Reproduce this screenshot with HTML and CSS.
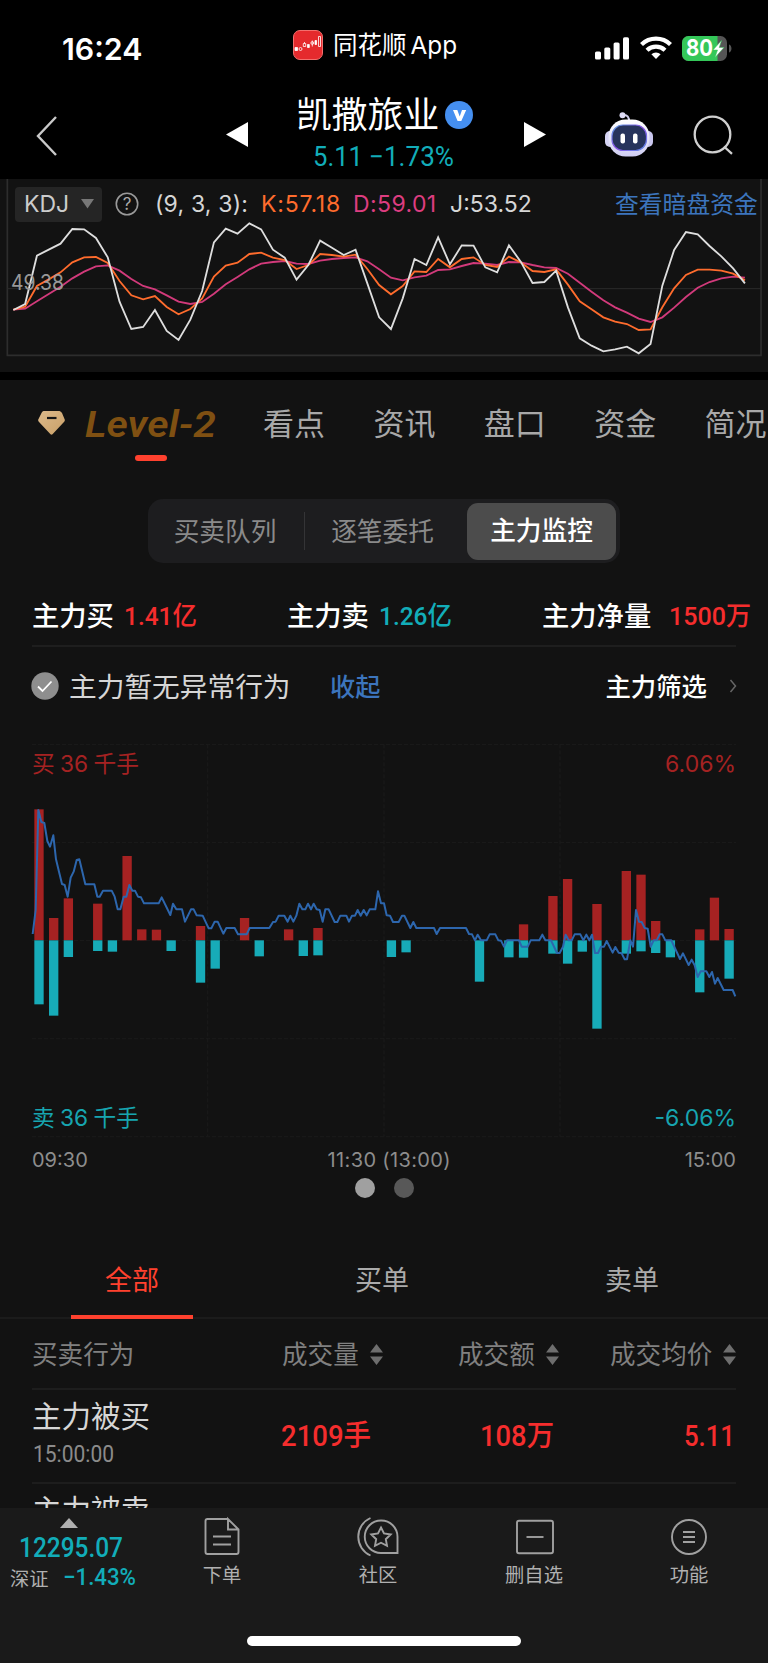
FILE: index.html
```
<!DOCTYPE html>
<html lang="zh-CN">
<head>
<meta charset="utf-8">
<title>凯撒旅业</title>
<link rel="stylesheet" href="styles.css">
</head>
<body>
<div class="phone">
  <header class="top">
    <div class="status">
      <span class="clock">16:24</span>
      <span class="app">
        <svg width="30" height="30" viewBox="0 0 30 30"><rect x=".5" y=".5" width="29" height="29" rx="6.5" fill="#e52a2d" stroke="#f3706e"/><g stroke="#fff" stroke-width=".8" fill="none"><path d="M2 17.500h2.500v3H2z" fill="#fff"/><circle cx="7.500" cy="19" r="1.500"/><path d="M11.500 12v1.500M10.300 13.500h2.400v3h-2.400z"/><path d="M14.500 14.500h1.800v3h-1.800z" fill="#fff"/><circle cx="19.300" cy="13" r="1.400"/><path d="M19.300 10.500v6"/><path d="M22 10.500h1.500v4H22z" fill="#fff"/><path d="M25.500 6.500h2v10h-2z"/></g></svg>
        <span>同花顺<i>App</i></span>
      </span>
      <span class="signals">
        <svg width="34" height="23" viewBox="0 0 34 23" fill="#fff"><rect y="14.500" width="6" height="8" rx="1.600"/><rect x="9.300" y="10.500" width="6" height="12" rx="1.600"/><rect x="18.600" y="5.500" width="6" height="17" rx="1.600"/><rect x="28" y=".3" width="6" height="22.200" rx="1.600"/></svg>
        <svg class="wifi" width="32" height="25" viewBox="0 0 32 25"><g fill="none" stroke="#fff" stroke-width="4.300"><path d="M1.500 9.500A21 21 0 0 1 30.500 9.500"/><path d="M7 15.200A13 13 0 0 1 25 15.200"/></g><path d="M16 24l-4.600-4.700a6.500 6.500 0 0 1 9.200 0z" fill="#fff"/></svg>
        <svg width="51" height="25" viewBox="0 0 51 25"><defs><clipPath id="bat"><rect width="45" height="25" rx="6.500"/></clipPath></defs><g clip-path="url(#bat)"><rect width="45" height="25" fill="#555"/><rect width="35.500" height="25" fill="#34c759"/></g><path d="M47 8.500c3.300 1 3.300 7 0 8z" fill="#555"/><text x="4" y="20.300" class="bat-num" textLength="27" lengthAdjust="spacingAndGlyphs">80</text><path d="M39.500 4.500L31 14h4.500l-2.500 7.500L42 11.500h-4.800z" fill="#fff" stroke="#34c759" stroke-width=".5"/></svg>
      </span>
    </div>
    <div class="nav">
      <svg class="back" width="24" height="42" viewBox="0 0 24 42"><path d="M21 2L3 21l18 19" fill="none" stroke="#c9c9c9" stroke-width="2.400"/></svg>
      <svg class="prev" width="22" height="25" viewBox="0 0 22 25"><path d="M22 0v25L0 12.500z" fill="#fff"/></svg>
      <div class="title">
        <div class="name">凯撒旅业<svg width="28" height="28" viewBox="0 0 28 28"><circle cx="14" cy="14" r="14" fill="#458ff0"/><path d="M8 9h4.300l2.400 6.500L17 9h4.200l-4.900 11h-3.700z" fill="#fff"/></svg></div>
        <svg class="din quote" width="142" height="24"><text x="0" y="21" textLength="50" lengthAdjust="spacingAndGlyphs">5.11</text><text x="56" y="21" textLength="85" lengthAdjust="spacingAndGlyphs">−1.73%</text></svg>
      </div>
      <svg class="next" width="22" height="25" viewBox="0 0 22 25"><path d="M0 0v25l22-12.500z" fill="#fff"/></svg>
      <svg class="robot" width="48" height="45" viewBox="0 0 48 45"><defs><linearGradient id="rb" x1="0" y1="0" x2="0" y2="1"><stop offset="0" stop-color="#fff"/><stop offset="1" stop-color="#cfcdf2"/></linearGradient><linearGradient id="rv" x1="0" y1="0" x2="1" y2="1"><stop offset="0" stop-color="#5aa0e0"/><stop offset=".5" stop-color="#8a4fe6"/><stop offset="1" stop-color="#5a8ce6"/></linearGradient></defs><path d="M24 10c.5-5-2-7-5-7" fill="none" stroke="#cfcdea" stroke-width="2"/><circle cx="17.500" cy="3.300" r="3" fill="#dedcf5"/><rect y="19" width="10" height="16" rx="5" fill="#d5d3f3"/><rect x="38" y="19" width="10" height="16" rx="5" fill="#c9c6ee"/><rect x="3.500" y="7.500" width="41" height="37" rx="17" fill="url(#rb)"/><rect x="7" y="13" width="34.500" height="25.500" rx="11" fill="#27345c" stroke="url(#rv)" stroke-width="1.200"/><rect x="15.500" y="21.500" width="4.500" height="10" rx="2" fill="#fff"/><rect x="28" y="21.500" width="4.500" height="10" rx="2" fill="#fff"/></svg>
      <svg class="search" width="42" height="42" viewBox="0 0 42 42" fill="none" stroke="#cfcfcf" stroke-width="2.300"><circle cx="20.500" cy="20.500" r="17.800"/><path d="M32 32.500l8 7.300"/></svg>
    </div>
  </header>

  <section class="kdj">
    <svg class="kdj-chart" id="kdj" width="768" height="192" viewBox="0 12 2304 576"></svg>
    <div class="kdj-bar">
      <span class="pick">KDJ<svg width="13" height="10" viewBox="0 0 13 10"><path d="M0 0h13L6.500 9.500z" fill="#777"/></svg></span>
      <svg class="help" width="24" height="24" viewBox="0 0 24 24"><circle cx="12" cy="12" r="10.700" fill="none" stroke="#9a9a9a" stroke-width="1.600"/><text x="12" y="18" text-anchor="middle">?</text></svg>
      <span class="p">(9, 3, 3):</span><span class="k">K:57.18</span><span class="d">D:59.01</span><span class="j">J:53.52</span>
      <span class="dark">查看暗盘资金</span>
    </div>
    <svg class="mid" width="60" height="24"><text x="1" y="20" textLength="53" lengthAdjust="spacingAndGlyphs">49.38</text></svg>
  </section>

  <main class="body">
    <nav class="tabs">
      <div class="level">
        <svg width="27" height="24" viewBox="0 0 27 24"><defs><linearGradient id="gem" x1="0" y1="0" x2="1" y2="1"><stop offset="0" stop-color="#dcb98a"/><stop offset="1" stop-color="#c9a068"/></linearGradient></defs><path d="M5.500 0h16Q23 .3 24 2l2.500 6q.8 1.500-.3 2.800L14.500 23.300q-1 .7-2 0L.8 10.800Q-.3 9.500.5 8L3.500 2Q4 .3 5.500 0z" fill="url(#gem)"/><path d="M9 7h9.500" stroke="#151515" stroke-width="2.200"/></svg>
        <svg class="level-name" width="136" height="50"><text x="0" y="38.500" textLength="131" lengthAdjust="spacingAndGlyphs">Level-2</text></svg>
      </div>
      <span>看点</span><span>资讯</span><span>盘口</span><span>资金</span><span>简况</span>
    </nav>
    <div class="mark"></div>
    <div class="segment"><span>买卖队列</span><b></b><span>逐笔委托</span><span class="on">主力监控</span></div>
    <div class="stats">
      <div>主力买<svg class="din up" width="74" height="32"><text x="0" y="24" textLength="73" lengthAdjust="spacingAndGlyphs">1.41亿</text></svg></div>
      <div>主力卖<svg class="din down" width="74" height="32"><text x="0" y="24" textLength="73" lengthAdjust="spacingAndGlyphs">1.26亿</text></svg></div>
      <div>主力净量<svg class="din up wide" width="84" height="32"><text x="0" y="24" textLength="82" lengthAdjust="spacingAndGlyphs">1500万</text></svg></div>
    </div>
    <div class="notice">
      <svg width="28" height="28" viewBox="0 0 28 28"><circle cx="14" cy="14" r="13.700" fill="#8e8e8e"/><path d="M7 14.500l4.500 4.500 9-9.500" fill="none" stroke="#fff" stroke-width="1.800"/></svg>
      <span class="msg">主力暂无异常行为</span><span class="fold">收起</span>
      <span class="filter">主力筛选</span>
      <svg width="8" height="14" viewBox="0 0 8 14"><path d="M1.500 1L6.500 7l-5 6" fill="none" stroke="#666" stroke-width="1.500"/></svg>
    </div>
    <div class="flow">
      <svg id="flow" width="768" height="410" viewBox="0 0 2304 1230"></svg>
      <div class="flow-tags">
        <div class="row red"><span>买 36 千手</span><span>6.06%</span></div>
        <div class="row cyan"><span>卖 36 千手</span><span>-6.06%</span></div>
      </div>
    </div>
    <div class="axis"><span>09:30</span><span class="noon">11:30 (13:00)</span><span>15:00</span></div>
    <div class="dots"><i></i><i></i></div>
    <div class="orders"><span class="on">全部</span><span>买单</span><span>卖单</span></div>
    <div class="grid head">
      <span>买卖行为</span>
      <span>成交量<svg class="sort" width="13" height="21" viewBox="0 0 13 21"><path d="M0 8.500L6.500 0 13 8.500zM0 12.500h13L6.500 21z"/></svg></span>
      <span>成交额<svg class="sort" width="13" height="21" viewBox="0 0 13 21"><path d="M0 8.500L6.500 0 13 8.500zM0 12.500h13L6.500 21z"/></svg></span>
      <span>成交均价<svg class="sort" width="13" height="21" viewBox="0 0 13 21"><path d="M0 8.500L6.500 0 13 8.500zM0 12.500h13L6.500 21z"/></svg></span>
    </div>
    <div class="grid item">
      <div class="act">主力被买<svg class="din time" width="84" height="22"><text x="1" y="19" textLength="81" lengthAdjust="spacingAndGlyphs">15:00:00</text></svg></div>
      <svg class="din up qty" width="92" height="34"><text x="0" y="27" textLength="90" lengthAdjust="spacingAndGlyphs">2109手</text></svg>
      <svg class="din up amt" width="76" height="34"><text x="-1" y="27" textLength="74" lengthAdjust="spacingAndGlyphs">108万</text></svg>
      <svg class="din up" width="52" height="34"><text x="-1" y="27" textLength="51" lengthAdjust="spacingAndGlyphs">5.11</text></svg>
    </div>
    <div class="grid item"><div class="act">主力被卖</div></div>
  </main>

  <footer class="bottom">
    <div class="menu">
      <div class="index">
        <svg width="18" height="10" viewBox="0 0 18 10"><path d="M0 10L9 0l9 10z" fill="#b0b0b0"/></svg>
        <svg class="din" width="104" height="24"><text x="-1" y="21" textLength="104" lengthAdjust="spacingAndGlyphs">12295.07</text></svg>
        <div>深证<svg class="din" width="73" height="22"><text x="-1" y="19" textLength="73" lengthAdjust="spacingAndGlyphs">−1.43%</text></svg></div>
      </div>
      <div class="act1"><svg width="44" height="42" viewBox="0 0 44 42"><path d="M28 3H7.500Q5.500 3 5.500 5v31q0 2 2 2h29q2 0 2-2V13.500L28 3v10.500h10.500M13 20.500h18M13 28.500h18"/></svg>下单</div>
      <div class="act2"><svg width="44" height="42" viewBox="0 0 44 42"><path d="M25 4.500A16.200 16.200 0 0 0 25 37H41.500V21A16.300 16.300 0 0 0 25 4.500zM14.500 2a20.500 20.500 0 0 0 0 37.500M25 11.500l3 6 6.700 1-4.900 4.700 1.200 6.600-6-3.100-6 3.100 1.200-6.600-4.900-4.700 6.700-1z"/></svg>社区</div>
      <div class="act3"><svg width="44" height="42" viewBox="0 0 44 42"><rect x="5" y="4.700" width="36" height="32.500" rx="2"/><path d="M14.500 21h17"/></svg>删自选</div>
      <div class="act4"><svg width="44" height="42" viewBox="0 0 44 42"><circle cx="22" cy="21" r="17"/><path d="M16 16h12M16 21h12M16 26h12"/></svg>功能</div>
    </div>
    <div class="home"></div>
  </footer>
</div>
<script src="charts.js"></script>
</body>
</html>
```
FILE: styles.css
```
* { box-sizing: border-box; }
body { margin: 0; background: #121212; font-family: Inter, "Noto Sans CJK SC", sans-serif; color: #d6d6d6; }
svg { display: block; flex: none; }
svg text { font-family: Inter, "Noto Sans CJK SC", sans-serif; }
.din { overflow: visible; }
.din text { font-family: Roboto, "Noto Sans CJK SC", sans-serif; font-weight: 500; fill: #12adb9; }
.din.up text { fill: #f52d2d; }
.phone { width: 768px; height: 1663px; overflow: hidden; display: flex; flex-direction: column; }

.top { height: 179px; background: #000; flex: none; }
.status { height: 90px; display: flex; }
.clock { width: 231px; margin-left: 62px; font-size: 30.300px; font-weight: 600; line-height: 98px; color: #fff; }
.app { width: 302px; display: flex; align-items: flex-start; font-size: 24.500px; line-height: 90px; color: #fff; }
.app svg { margin: 30px 10px 0 0; }
.app i { font-style: normal; font-size: 24.300px; margin-left: 4px; }
.signals { display: flex; padding-top: 37px; }
.signals .wifi { margin: -2px 10px 0 11px; }
.signals svg:last-child { margin-top: -1px; }
.bat-num { font-size: 23px; font-weight: 700; fill: #fff; }
.nav { height: 89px; display: flex; align-items: flex-start; }
.back { margin: 25px 0 0 35px; }
.prev { margin: 32px 0 0 167px; }
.title { width: 276px; padding-left: 48px; }
.name { display: flex; align-items: center; gap: 6px; height: 50px; font-size: 35.800px; line-height: 50px; color: #fff; }
.title .quote { margin: 5px 0 0 17px; }
.quote text { font-size: 27px; font-weight: 400; }
.next { margin-top: 32px; }
.robot { margin: 22px 0 0 59px; }
.search { margin: 24px 0 0 39px; }

.kdj { height: 193px; flex: none; display: grid; background: #121212; }
.kdj > * { grid-area: 1 / 1; }
.kdj-bar { display: flex; align-items: center; align-self: start; height: 36px; margin-top: 7px; font-size: 23px; white-space: nowrap; }
.pick { width: 87px; height: 35px; margin-left: 15px; padding-left: 9px; background: #252525; border-radius: 4px; display: flex; align-items: center; font-size: 23px; color: #ccc; gap: 12px; }
.help { margin: 0 16px 0 13px; }
.help text { font-size: 17px; fill: #aaa; }
.kdj-bar .p { width: 106px; letter-spacing: .2px; }
.kdj-bar .k { width: 92px; color: #ff6c2d; letter-spacing: .8px; }
.kdj-bar .d { width: 97px; color: #dd3d80; letter-spacing: .4px; }
.kdj-bar .j { width: 165px; }
.dark { color: #3c75bd; font-size: 23.800px; margin-top: -4px; }
.mid { margin: 91px 0 0 10px; }
.mid text { font-size: 22px; fill: #a0a0a0; opacity: .95; }

.body { height: 1136px; flex: none; overflow: hidden; border-top: 8px solid #000; background: #121212; }
.tabs { display: flex; height: 62px; align-items: flex-end; overflow: hidden; padding-bottom: 1px; }
.tabs > span { width: 110.400px; flex: none; font-size: 31px; line-height: 34px; color: #a8a8a8; }
.level { width: 263px; height: 50px; margin-bottom: -7px; flex: none; display: flex; padding-left: 38px; gap: 20px; align-items: center; }
.level-name text { font-family: Roboto, sans-serif; font-size: 37px; font-weight: 600; font-style: italic; fill: #7f5012; }
.mark { width: 32px; height: 6px; border-radius: 3px; margin: 13px 0 0 135px; background: #ff412e; }
.segment { width: 472px; height: 64px; margin: 38px 0 0 148px; padding: 4px; border-radius: 15px; background: #1d1d1f; display: flex; align-items: center; font-size: 25.700px; color: #8a8a8a; }
.segment span { width: 152px; text-align: center; padding-right: 6px; margin-top: -3px; }
.segment b { width: 1px; height: 38px; background: #343436; }
.segment span + span, .segment .on { margin: 0 0 0 7px; width: 149px; }
.segment b + span { width: 155px; padding-right: 0; }
.segment .on { height: 57px; line-height: 56px; border-radius: 11px; background: #4c4c4c; color: #fff; font-weight: 500; padding: 0; }
.stats { height: 84px; margin: 0 32px; border-bottom: 2px solid #1e1e1e; display: grid; grid-template-columns: 255px 255px 1fr; color: #fff; font-size: 27.300px; font-weight: 500; line-height: 107px; }
.stats div { display: flex; white-space: nowrap; align-items: flex-start; }
.stats svg { margin: 38px 0 0 10px; }
.stats .wide { margin-left: 18px; }
.stats text { font-size: 26.500px; }
.notice { height: 79px; padding: 0 31px 2px 31px; display: flex; align-items: center; }
.notice span { margin-top: -2px; }
.notice .msg { font-size: 27.700px; margin-left: 10px; width: 261px; white-space: nowrap; }
.fold { font-size: 25.200px; font-weight: 500; color: #3c75bd; }
.notice .filter { margin: -2px 22px 0 auto; font-size: 25.400px; font-weight: 500; color: #fff; }
.flow { display: grid; height: 410px; margin-top: 4px; }
.flow > * { grid-area: 1 / 1; }
.flow-tags { display: flex; flex-direction: column; justify-content: space-between; padding: 19px 32px 7px; font-size: 22.700px; line-height: 30px; }
.row { display: flex; justify-content: space-between; }
.row span:last-child { font-size: 23px; }
.row span:first-child { word-spacing: -1px; }
.red { color: #a52222; }
.cyan { color: #17a5b0; }
.axis { display: flex; justify-content: space-between; padding: 0 32px; height: 38px; line-height: 40px; font-size: 20px; color: #8d8d8d; }
.noon { letter-spacing: .35px; margin-left: 6px; }
.dots { display: flex; justify-content: center; gap: 19px; height: 22px; }
.dots i { width: 20px; height: 20px; border-radius: 50%; background: #a0a0a0; }
.dots i + i { background: #585858; }
.orders { height: 119px; display: flex; padding-left: 71px; gap: 128px; border-bottom: 2px solid #1b1b1b; font-size: 27px; line-height: 161px; color: #ababab; }
.orders span { width: 122px; height: 119px; text-align: center; }
.orders .on { color: #ff412e; border-bottom: 4px solid #ff412e; }
.grid { display: grid; margin: 0 32px; border-bottom: 2px solid #1d1d1d; }
.head { grid-template-columns: 250px 176px 152px 1fr; height: 71px; line-height: 71px; font-size: 25.600px; color: #808080; }
.head span { display: flex; align-items: center; white-space: nowrap; }
.sort { margin-left: 11px; fill: #6e6e6e; }
.item { grid-template-columns: 249px 200px 1fr 51px; height: 94px; }
.act { font-size: 29.500px; line-height: 40px; padding-top: 6px; }
.item > svg { margin-top: 29px; }
.item > svg text { font-size: 29px; }
.time { margin-top: 7px; }
.din.time text { font-size: 23px; font-weight: 400; fill: #8b8b8b; }

.bottom { height: 155px; flex: none; background: #1a1a1a; }
.menu { display: flex; height: 128px; font-size: 19.300px; color: #b0b0b0; }
.menu > div { padding-top: 9px; line-height: 34px; text-align: center; }
.menu > div > svg { margin: 0 auto; }
.act1, .act2, .act3, .act4 { width: 156px; }
.menu > .act1, .menu > .act2, .menu > .act3, .menu > .act4 { fill: none; stroke: #a0a0a0; stroke-width: 1.900; padding-top: 8px; }
.menu > .act4 { width: 154px; }
.index { width: 144px; }
.menu .index > svg { margin-left: 60px; margin-top: 1px; }
.menu .index > svg.din { margin: 8px 0 0 20px; }
.index text { font-size: 27px; }
.index div { display: flex; padding-left: 10px; margin-top: 2px; align-items: center; gap: 15px; }
.index div svg { margin-top: -4px; }
.index div text { font-size: 23px; }
.home { width: 274px; height: 10px; border-radius: 5px; background: #fff; margin: 0 0 0 247px; }
```
FILE: charts.js
```
// KDJ indicator: one value per trading day, three series.
const J = [405,387,242,224,206,162,163,189,247,380,462,456,405,468,495,434,348,202,161,176,145,163,224,248,314,270,197,218,240,224,325,427,462,370,252,270,187,268,211,212,277,292,211,260,324,321,287,397,490,512,529,523,515,535,507,332,225,171,178,213,244,280,325];
const K = [404,395,333,313,292,262,247,246,264,318,361,373,363,396,418,402,370,305,272,263,237,233,248,255,282,270,237,240,245,239,282,330,358,333,289,291,252,277,252,247,270,276,245,262,288,291,283,329,379,403,427,440,447,465,463,397,340,300,284,284,287,296,316];
const D = [404,401,379,357,335,310,290,274,271,287,312,333,343,361,380,387,381,356,328,306,283,266,261,258,266,267,257,252,249,247,259,283,308,316,307,302,285,283,273,264,266,270,261,262,270,277,279,296,323,350,376,397,413,431,441,427,398,366,338,321,310,305,308];
const step = 35.4;
const line = (ys, color) => `<polyline fill="none" stroke="${color}" stroke-width="5.500" points="${ys.map((y, i) => (40 + i * step).toFixed(1) + ',' + y).join(' ')}"/>`;
document.getElementById('kdj').innerHTML =
  '<path d="M22 0V541H2283V0" fill="none" stroke="#2d2d2d" stroke-width="5"/><path d="M22 341H2283" stroke="#2b2b2b" stroke-width="3"/>' +
  line(D, '#d23a7b') + line(K, '#ff6c2d') + line(J, '#dedede');

// Main-force flow: [slot, top of buy bar, bottom of sell bar]
const bars = [[0,238,823],[1,564,857],[2,505,681],[4,521,663],[5,0,665],[6,378,0],[7,598,0],[8,599,0],[9,0,663],[11,588,758],[12,0,716],[14,564,0],[15,0,679],[17,598,0],[18,0,678],[19,594,676],[24,0,681],[25,0,667],[30,0,755],[32,0,682],[33,583,683],[35,498,671],[36,447,701],[37,0,665],[38,522,896],[40,423,671],[41,434,664],[42,573,669],[43,0,682],[45,598,787],[46,503,0],[47,597,746]];
const zero = 631;
const am = '98,612 107,540 115,240 124,276 133,279 142,333 150,350 160,316 168,388 177,425 186,462 194,465 203,500 212,443 221,425 230,390 238,388 247,425 256,463 283,463 292,500 299,500 309,482 335,482 344,500 353,538 361,538 371,500 379,500 388,465 397,482 405,482 414,500 423,502 432,520 476,520 485,502 511,555 519,521 529,538 546,538 555,575 573,538 581,538 590,556 608,557 626,595 634,595 644,575 653,575 670,611 679,594 704,594 714,613 740,613 749,594 808,594 819,576 827,575 836,557 853,557 863,575 871,557 880,575 889,557 898,521 907,538 916,538 924,521 933,538 941,521 950,538 959,540 968,575 976,538 986,538 1004,576 1012,576 1021,557 1039,557 1047,575 1056,557 1065,557 1073,540 1082,557 1091,540 1100,556 1109,538 1126,538 1134,484 1143,520 1152,520';
const pm = '26,556 36,557 45,576 62,576 72,557 79,557 97,594 106,576 115,594 168,594 176,612 186,594 264,594 273,612 282,613 291,631 299,614 309,631 326,631 335,613 352,613 361,631 369,632 378,650 387,631 423,631 431,650 449,650 458,631 484,631 493,614 502,631 519,631 537,669 545,669 555,650 563,614 572,631 581,631 590,613 607,613 616,631 625,614 634,631 642,614 651,669 660,669 669,650 678,650 686,633 704,668 712,651 722,668 731,670 740,688 747,688 757,631 765,650 774,540 783,575 791,576 800,594 809,596 818,650 827,631 836,631 845,613 853,613 862,631 880,631 906,687 915,670 932,705 941,689 950,706 959,741 968,724 985,724 994,741 1002,726 1011,761 1019,744 1037,780 1064,780 1072,799';
const pmShifted = pm.split(' ').map(p => { const [x, y] = p.split(','); return (+x + 1134) + ',' + y; }).join(' ');
let out = '<g stroke="#1b1b1b" stroke-width="3" stroke-dasharray="12 6">';
for (const y of [43, 337, 631, 926, 1220]) out += `<path d="M96 ${y}H2208"/>`;
for (const x of [623, 1152, 1680]) out += `<path d="M${x} 43V1220"/>`;
out += '</g>';
for (const [i, top, bottom] of bars) {
  const x = 103 + i * 44.05;
  if (top) out += `<rect x="${x}" y="${top}" width="28" height="${zero - top}" fill="#a62222"/>`;
  if (bottom) out += `<rect x="${x}" y="${zero}" width="28" height="${bottom - zero}" fill="#17abb8"/>`;
}
out += `<polyline fill="none" stroke="#2d66ad" stroke-width="6" stroke-linejoin="round" points="${am} ${pmShifted}"/>`;
document.getElementById('flow').innerHTML = out;
```
